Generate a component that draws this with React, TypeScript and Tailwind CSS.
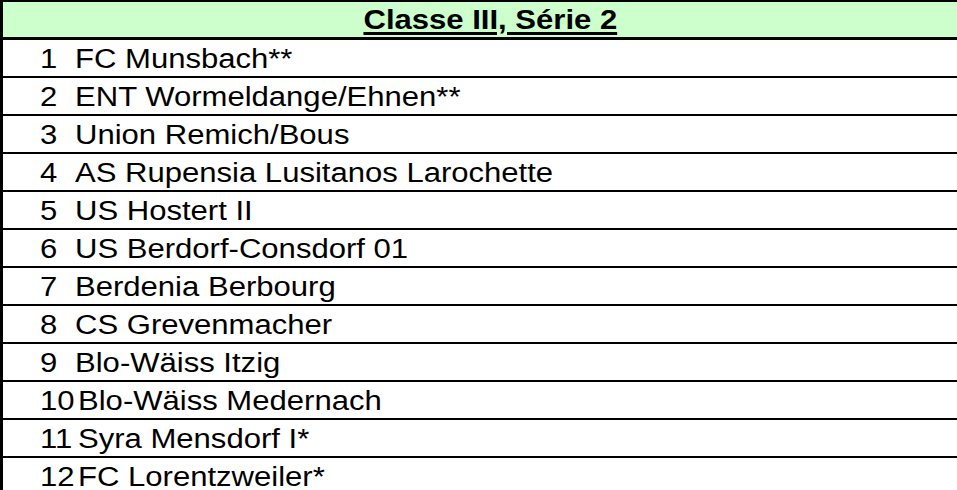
import React from "react";

const rows: [string, string][] = [
  ["1", "FC Munsbach**"],
  ["2", "ENT Wormeldange/Ehnen**"],
  ["3", "Union Remich/Bous"],
  ["4", "AS Rupensia Lusitanos Larochette"],
  ["5", "US Hostert II"],
  ["6", "US Berdorf-Consdorf 01"],
  ["7", "Berdenia Berbourg"],
  ["8", "CS Grevenmacher"],
  ["9", "Blo-Wäiss Itzig"],
  ["10", "Blo-Wäiss Medernach"],
  ["11", "Syra Mensdorf I*"],
  ["12", "FC Lorentzweiler*"],
];

export default function App() {
  return (
    <div
      className="w-[957px] h-[490px] overflow-hidden bg-white text-black"
      style={{ fontFamily: '"Liberation Sans", Arial, sans-serif' }}
    >
      <div className="w-[977px] border-l-[3px] border-t-2 border-black">
        <div className="h-[38px] bg-[#ccffcc] border-b-[3px] border-black flex items-center justify-center pt-[1px]">
          <span className="inline-block text-[27px] leading-none font-bold underline decoration-[3px] underline-offset-[3px] scale-x-[1.15]">
            Classe III, Série 2
          </span>
        </div>
        {rows.map(([n, name]) => (
          <div
            key={n}
            className="h-[38px] border-b-2 border-black flex items-center pl-[37px] pt-[2px]"
          >
            <span
              className={
                n.length > 1
                  ? "w-[38px] shrink-0 text-[27px] leading-none"
                  : "w-[35px] shrink-0 text-[27px] leading-none"
              }
            >
              <span className="inline-block origin-left scale-x-[1.15]">{n}</span>
            </span>
            <span className="inline-block whitespace-nowrap text-[27px] leading-none origin-left scale-x-[1.15]">
              {name}
            </span>
          </div>
        ))}
      </div>
    </div>
  );
}
